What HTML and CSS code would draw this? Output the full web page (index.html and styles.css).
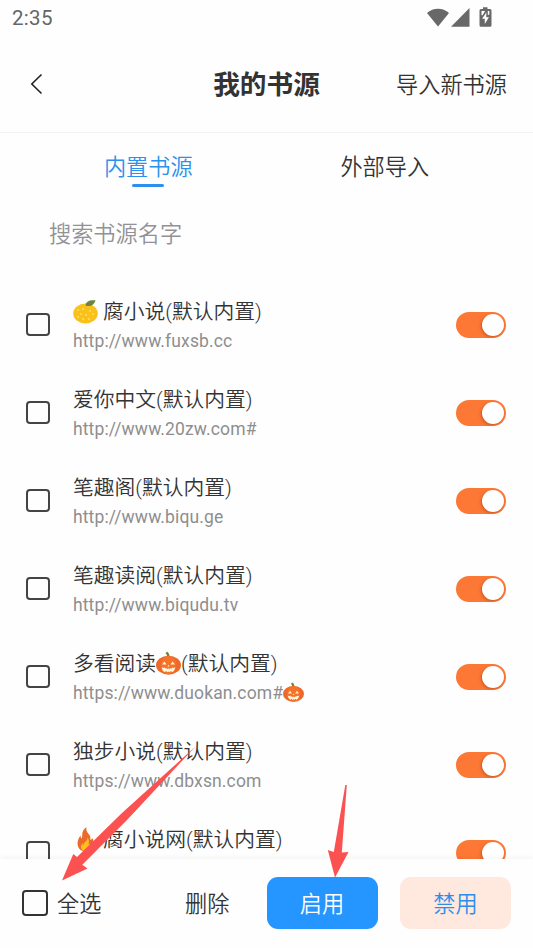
FILE: index.html
```html
<!DOCTYPE html>
<html lang="zh-CN">
<head>
<meta charset="utf-8">
<title>我的书源</title>
<link rel="stylesheet" href="styles.css">
</head>
<body>
<svg class="defs" aria-hidden="true">
  <symbol id="pumpkin" viewBox="0 0 24 24">
    <path d="M11 6C10.500 3.500 9.500 2.500 9 2L11 .7C12.500 2 13 4 13.200 6z" fill="#68863b"/>
    <ellipse cx="12" cy="13.600" rx="12" ry="9" fill="#ed682b"/>
    <ellipse cx="12" cy="13.600" rx="7.500" ry="9" fill="#f5722b"/>
    <path d="M5.800 13L8 10l2.200 3zM13.800 13L16 10l2.200 3zM11 14.800l1-1.500 1 1.500z" fill="#fff3c8"/>
    <path d="M5.500 15.500l2 .8.700-.6.900 1 1.200-.2.800.8 1-.8 1 .8.900-.8 1.200.2.800-1 1 .6 1.500-.8c-.4 3-2 4.300-3.200 4.700l-1-1-1.200 1.200-1.200-.8-1.200.8-1-1.200-1.200 1c-1.500-.7-2.800-2.200-3-4.700z" fill="#fff3d8"/>
  </symbol>
</svg>
<div class="app">
  <div class="status">
    <span>2:35</span>
    <svg class="status-icons" width="66" height="20" viewBox="0 0 66 20" fill="#686868">
      <path d="M0 5C6-.7 16-.7 22 5L11 18.500z"/>
      <path d="M42.500 0v18.800H24z"/>
      <path fill-rule="evenodd" d="M56 1V-.8h4.500V1H63q1.500 0 1.500 1.500v14.800q0 1.500-1.500 1.500h-9q-1.500 0-1.500-1.500V2.500Q52.500 1 54 1zM59.300 4.500l-4.200 6.300h2.700v5.200l4.100-6.800h-2.600z"/>
      <path fill="#fff" d="M54.500 3h3.600l-2.600 4.200h-1zM60.800 3h1.500v3.800h-1.500z"/>
    </svg>
  </div>
  <header class="header">
    <svg class="back" width="14" height="22" viewBox="0 0 14 22"><path d="M11.500 1.500L1.800 11l9.700 9.500" fill="none" stroke="#222" stroke-width="1.600"/></svg>
    <h1>我的书源</h1>
    <a class="import">导入新书源</a>
  </header>
  <nav class="tabs">
    <div class="tab active">内置书源</div>
    <div class="tab">外部导入</div>
  </nav>
  <div class="search">搜索书源名字</div>
  <main class="list">
    <div class="row"><i class="check"></i><div class="info"><div class="name"><svg class="emoji orange" viewBox="0 0 25 25"><ellipse cx="12.500" cy="14.500" rx="12.300" ry="10" fill="#fbc11b"/><path d="M12.500 6.500C13 3 15 .9 22.500 1.200 21 6.500 17 8 12.500 6.500z" fill="#6d863f"/><g fill="#fff0a0"><circle cx="5" cy="11" r=".8"/><circle cx="8" cy="15" r=".8"/><circle cx="5" cy="18" r=".8"/><circle cx="10" cy="20" r=".8"/><circle cx="13" cy="16" r=".8"/><circle cx="10" cy="10" r=".8"/><circle cx="17" cy="12" r=".8"/><circle cx="20" cy="15" r=".8"/><circle cx="16" cy="20" r=".8"/></g></svg>腐小说(默认内置)</div><div class="url">http://www.fuxsb.cc</div></div><i class="toggle"></i></div>
    <div class="row"><i class="check"></i><div class="info"><div class="name">爱你中文(默认内置)</div><div class="url">http://www.20zw.com#</div></div><i class="toggle"></i></div>
    <div class="row"><i class="check"></i><div class="info"><div class="name">笔趣阁(默认内置)</div><div class="url">http://www.biqu.ge</div></div><i class="toggle"></i></div>
    <div class="row"><i class="check"></i><div class="info"><div class="name">笔趣读阅(默认内置)</div><div class="url">http://www.biqudu.tv</div></div><i class="toggle"></i></div>
    <div class="row"><i class="check"></i><div class="info"><div class="name">多看阅读<svg class="emoji pumpkin"><use href="#pumpkin"/></svg>(默认内置)</div><div class="url">https://www.duokan.com#<svg class="emoji small"><use href="#pumpkin"/></svg></div></div><i class="toggle"></i></div>
    <div class="row"><i class="check"></i><div class="info"><div class="name">独步小说(默认内置)</div><div class="url">https://www.dbxsn.com</div></div><i class="toggle"></i></div>
    <div class="row"><i class="check"></i><div class="info"><div class="name"><svg class="emoji orange" viewBox="0 0 25 25"><path d="M13.500 0C7 5 10.500 9 8.500 11.500 7.500 11 7.800 9.500 7.700 8.500 2 15 4.500 24.500 12.500 24.500S22 17 19.500 11c-.8 1.500-1.400 2-2.200 1.500C18.500 7 12 6 13.500 0z" fill="#e96a2c"/><path d="M14.500 10.500c.5 4-4.500 4.500-4 8-1.200-.5-1-1.500-1-2.500-3 4-1.200 8.500 3.300 8.500 5.500 0 6.200-5.500 4.200-8-.5 1-1 1.200-1.500 1 .8-3 .5-5-1-7z" fill="#fcc021"/></svg>腐小说网(默认内置)</div><div class="url"></div></div><i class="toggle"></i></div>
  </main>
  <footer class="footer">
    <i class="check large"></i><span class="all">全选</span>
    <span class="delete">删除</span>
    <button class="btn enable">启用</button>
    <button class="btn disable">禁用</button>
  </footer>
  <svg class="arrows" width="533" height="948" viewBox="0 0 533 948">
    <g fill="#fb5150">
      <path d="M195.500 746.500L122 813 77 857 73.300 854 62 880.500l25.500-12-5.200-3.700L127 820z"/>
      <path d="M345.300 785h1.500L341.800 852.500l6.700-.5L335 877.500 327.800 850l6 2z"/>
    </g>
  </svg>
</div>
</body>
</html>
```
FILE: styles.css
```css
* { box-sizing: border-box; }
body {
  margin: 0;
  background: #fefefe;
  color: #333;
  font-family: Roboto, "Noto Sans CJK SC", sans-serif;
  font-weight: 350;
}
.defs { position: absolute; width: 0; height: 0; }
.app {
  position: relative;
  display: flex;
  flex-direction: column;
  width: 533px;
  height: 948px;
  overflow: hidden;
}
.status {
  flex: none;
  display: flex;
  align-items: center;
  justify-content: space-between;
  height: 36px;
  padding: 0 40px 0 12px;
  color: #666;
  font-size: 20.5px;
  font-weight: 400;
  letter-spacing: .3px;
}
.status-icons { overflow: visible; margin-top: -1px; }
.header {
  flex: none;
  display: grid;
  grid-template-columns: 1fr auto 1fr;
  align-items: center;
  height: 97px;
  padding: 2px 26px 0 26px;
  border-bottom: 1px solid #f1f1f1;
}
.back { margin: -3px 0 0 4px; }
.header h1 { margin: 0; font-size: 26.7px; line-height: 40px; font-weight: 700; }
.import { justify-self: end; font-size: 22.2px; line-height: 34px; }
.tabs {
  flex: none;
  display: flex;
  height: 67px;
  padding: 0 30px;
}
.tab {
  display: flex;
  flex: 1;
  flex-direction: column;
  align-items: center;
  padding-top: 17px;
  font-size: 22.2px;
  line-height: 34px;
}
.tab.active { color: #2b91ec; }
.tab.active::after {
  content: "";
  width: 32px;
  height: 3px;
  border-radius: 2px;
  background: #2b91ec;
}
.search {
  flex: none;
  height: 81px;
  padding: 17px 49px;
  color: #929296;
  font-size: 22.2px;
  line-height: 34px;
}
.list { flex: 1; min-height: 0; overflow: hidden; }
.row {
  display: flex;
  align-items: center;
  height: 88px;
  padding: 0 27px 0 26px;
}
.check {
  flex: none;
  width: 24px;
  height: 23px;
  margin-bottom: 1px;
  border: 2px solid #444;
  border-radius: 4px;
}
.info { flex: 1; margin-left: 23px; padding-top: 1px; white-space: nowrap; }
.name { height: 31px; font-size: 20.75px; line-height: 32px; }
.url {
  height: 28px;
  color: #8e8e8e;
  font-size: 17.5px;
  font-weight: 400;
  line-height: 28px;
  letter-spacing: .13px;
}
.emoji { width: 25px; height: 25px; vertical-align: -5px; overflow: visible; }
.emoji.orange { margin-right: 5px; }
.emoji.small { width: 21px; height: 21px; vertical-align: -4px; }
.toggle {
  flex: none;
  display: flex;
  align-items: center;
  justify-content: flex-end;
  width: 50px;
  height: 26px;
  padding: 2px;
  border-radius: 13px;
  background: #fd7835;
}
.toggle::after {
  content: "";
  width: 22px;
  height: 22px;
  border-radius: 50%;
  background: #fff;
  box-shadow: -1px 1px 3px rgba(100, 30, 0, .35);
}
.footer {
  flex: none;
  display: flex;
  align-items: center;
  height: 89px;
  padding: 0 22px 1px;
  background: #fefefe;
  box-shadow: 0 -1px 6px rgba(0, 0, 0, .05);
  font-size: 22.2px;
  line-height: 34px;
  white-space: nowrap;
}
.check.large { width: 26px; height: 26px; border-color: #333; }
.all { flex: none; width: 44px; margin-left: 9px; padding-top: 2px; }
.delete { flex: none; width: 44px; margin-left: 84px; padding-top: 2px; }
.btn {
  flex: none;
  width: 111px;
  height: 52px;
  padding: 2px 0 0;
  border: 0;
  border-radius: 11px;
  font: inherit;
}
.enable { margin-left: 37.5px; background: #2595ff; color: #fff; }
.disable { margin-left: 22.5px; background: #ffe8de; color: #2b8fea; }
.arrows { position: absolute; top: 0; left: 0; pointer-events: none; }
```
